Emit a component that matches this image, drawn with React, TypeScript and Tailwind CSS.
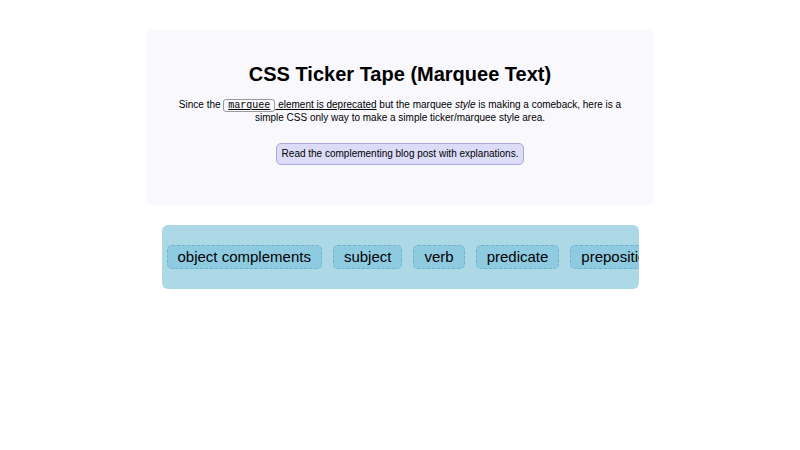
import React from "react";

const words = [
  "object complements",
  "subject",
  "verb",
  "predicate",
  "prepositional phrase",
  "indirect object",
  "direct object",
];

export default function App() {
  return (
    <div
      className="min-h-[450px] w-full bg-white pt-[30px] text-black"
      style={{ fontFamily: '"Liberation Sans", Arial, sans-serif' }}
    >
      {/* intro card */}
      <section className="mx-auto w-[508px] rounded-[6px] bg-[#f8f8fd] px-5 pt-[32px] pb-[40px] text-center">
        <h1 className="text-[20px] font-bold leading-[24px]">
          CSS Ticker Tape (Marquee Text)
        </h1>
        <p className="mt-[13px] text-[10px] leading-[11.5px]">
          Since the{" "}
          <a className="underline">
            <code
              className="rounded-[3px] border border-[#999] px-[4px] text-[10px]"
              style={{ fontFamily: '"Liberation Mono", "Courier New", monospace' }}
            >
              marquee
            </code>{" "}
            element is deprecated
          </a>{" "}
          but the marquee <em>style</em> is making a comeback, here is a simple
          CSS only way to make a simple ticker/marquee style area.
        </p>
        <div className="mt-[20px] flex justify-center">
          <a className="rounded-[5px] border border-[#a9a9dd] bg-[#dcdcf9] px-[5px] py-[4px] text-[10px] leading-[11.5px]">
            Read the complementing blog post with explanations.
          </a>
        </div>
      </section>

      {/* ticker tape */}
      <div className="mx-auto mt-[20px] flex h-[64px] w-[477px] items-center overflow-hidden rounded-[6px] bg-[#add8e6] px-[5px]">
        <ul className="flex shrink-0 gap-[11px] whitespace-nowrap">
          {words.map((w) => (
            <li
              key={w}
              className="rounded-[5px] border border-dashed border-[#6cb4cf] bg-[#8ecbe0] px-[10px] py-[3px] text-[15px] leading-[16px]"
            >
              {w}
            </li>
          ))}
        </ul>
      </div>
    </div>
  );
}
